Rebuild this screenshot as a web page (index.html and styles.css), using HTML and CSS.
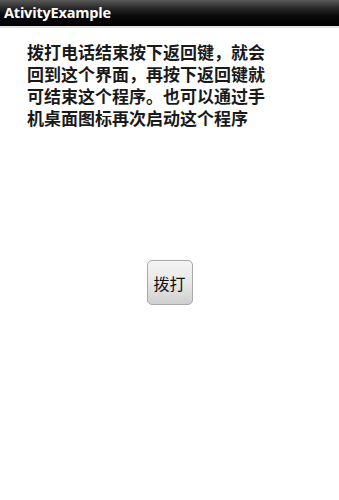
FILE: index.html
```html
<!DOCTYPE html>
<html lang="zh">
<head>
<meta charset="utf-8">
<link rel="stylesheet" href="styles.css">
</head>
<body>
<div class="titlebar">AtivityExample</div>
<div class="content">
  <p class="message">拨打电话结束按下返回键，就会回到这个界面，再按下返回键就可结束这个程序。也可以通过手机桌面图标再次启动这个程序</p>
  <div class="actions">
    <button class="dial" type="button">拨打</button>
  </div>
</div>
</body>
</html>
```
FILE: styles.css
```css
html, body {
  margin: 0;
  padding: 0;
  background: #ffffff;
  width: 339px;
  height: 500px;
  overflow: hidden;
}
.titlebar {
  height: 26px;
  line-height: 25px;
  padding-left: 4px;
  background: linear-gradient(to bottom, #5a5a5a 0%, #2a2a2a 30%, #0a0a0a 60%, #000000 100%);
  color: #ffffff;
  font-family: "Open Sans", "DejaVu Sans", sans-serif;
  font-weight: 700;
  font-size: 14.5px;
  letter-spacing: -0.2px;
  border-bottom: 2px solid #e4e4e4;
}
.content {
  padding: 13px 0 0 27px;
}
.message {
  margin: 0;
  width: 240px;
  font-family: "Noto Sans CJK SC", sans-serif;
  font-weight: 700;
  font-size: 17px;
  line-height: 22px;
  color: #1a1a1a;
}
.actions {
  display: flex;
  justify-content: center;
  margin-left: -27px;
  margin-top: 131px;
}
.dial {
  width: 46px;
  height: 45px;
  padding: 0;
  border: 1px solid #a8a8a8;
  border-radius: 5px;
  background: linear-gradient(to bottom, #f4f4f4 0%, #e8e8e8 50%, #cfcfcf 100%);
  font-family: "Noto Sans CJK SC", sans-serif;
  font-size: 16px;
  color: #111111;
}
```
